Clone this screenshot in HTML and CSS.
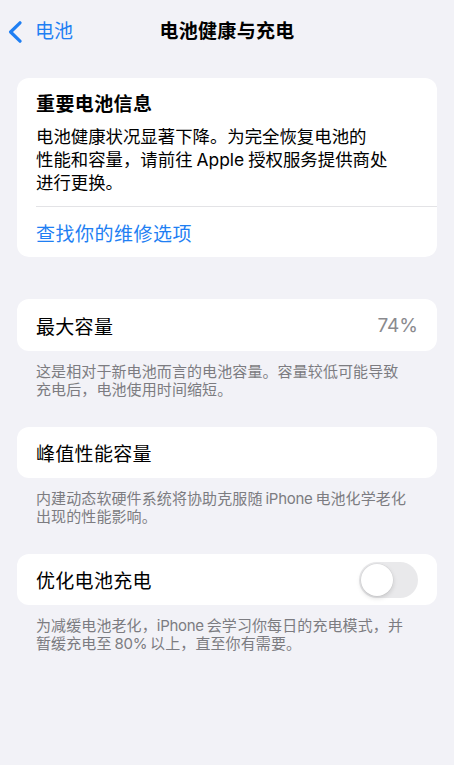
FILE: index.html
```html
<!DOCTYPE html>
<html lang="zh-CN">
<head>
<meta charset="utf-8">
<title>电池健康与充电</title>
<link rel="stylesheet" href="styles.css">
</head>
<body>
<header class="navbar">
  <a class="back" href="#">
    <svg class="chevron" width="15" height="22" viewBox="0 0 15 22" aria-hidden="true">
      <polyline points="12,1.8 2.6,11 12,20.2" fill="none" stroke="currentColor" stroke-width="3.2" stroke-linecap="round" stroke-linejoin="round"/>
    </svg>
    <span>电池</span>
  </a>
  <h1 class="title">电池健康与充电</h1>
  <span></span>
</header>

<main class="content">
  <section class="card notice">
    <div class="notice-body">
      <h2 class="notice-title">重要电池信息</h2>
      <p class="notice-text">电池健康状况显著下降。为完全恢复电池的<br>性能和容量，请前往<span class="latin">Apple</span>授权服务提供商处<br>进行更换。</p>
    </div>
    <a class="notice-link" href="#">查找你的维修选项</a>
  </section>

  <section class="group first">
    <div class="card row tall">
      <span class="label">最大容量</span>
      <span class="value">74%</span>
    </div>
    <p class="footer">这是相对于新电池而言的电池容量。容量较低可能导致<br>充电后，电池使用时间缩短。</p>
  </section>

  <section class="group">
    <div class="card row">
      <span class="label">峰值性能容量</span>
    </div>
    <p class="footer">内建动态软硬件系统将协助克服随<span class="latin">iPhone</span>电池化学老化<br>出现的性能影响。</p>
  </section>

  <section class="group">
    <div class="card row">
      <span class="label">优化电池充电</span>
      <span class="switch" role="switch" aria-checked="false"><span class="knob"></span></span>
    </div>
    <p class="footer">为减缓电池老化，<span class="latin after-punct">iPhone</span>会学习你每日的充电模式，并<br>暂缓充电至<span class="latin">80%</span>以上，直至你有需要。</p>
  </section>
</main>
</body>
</html>
```

FILE: styles.css
```css
* {
  box-sizing: border-box;
}

html,
body {
  margin: 0;
  padding: 0;
}

body {
  background: #f2f2f7;
  color: #000;
  font-family: Inter, "Noto Sans CJK SC", sans-serif;
  width: 454px;
  min-height: 765px;
}

/* navigation bar */
.navbar {
  height: 64px;
  display: grid;
  grid-template-columns: 1fr auto 1fr;
  align-items: center;
  padding-left: 8px;
}

.back {
  display: flex;
  align-items: center;
  gap: 12px;
  color: #1f7ff3;
  text-decoration: none;
  font-size: 19px;
  line-height: 24px;
}

.chevron {
  display: block;
}

.title {
  margin: 0;
  font-size: 19px;
  line-height: 24px;
  font-weight: 600;
  letter-spacing: 0.3px;
  padding-right: 8px;
}

/* content */
.content {
  padding: 14px 17px 0;
}

.card {
  background: #fff;
  border-radius: 12px;
}

/* Latin runs inside Chinese text get a narrow gap on both sides */
.latin {
  margin: 0 4px;
  letter-spacing: 0;
}

.footer .latin {
  margin: 0 3px;
  letter-spacing: -0.3px;
}

/* a full-width comma already carries its own gap */
.footer .latin.after-punct {
  margin-left: 0;
}

.notice-body {
  padding: 15px 19px 12px;
}

.notice-title {
  margin: 0;
  font-size: 19px;
  line-height: 24px;
  font-weight: 600;
  letter-spacing: 0.4px;
}

.notice-text {
  margin: 8px 0 0;
  font-size: 17.4px;
  line-height: 23px;
}

.notice-link {
  display: flex;
  align-items: center;
  height: 51px;
  margin-left: 19px;
  border-top: 1px solid #e3e3e6;
  color: #1f7ff3;
  text-decoration: none;
  font-size: 19px;
  letter-spacing: 0.5px;
}

.group {
  margin-top: 28px;
}

.group.first {
  margin-top: 42px;
}

.row {
  height: 51px;
  display: flex;
  align-items: center;
  justify-content: space-between;
  padding: 0 19px;
}

.row.tall {
  height: 52px;
}

.label {
  font-size: 19px;
  letter-spacing: 0.3px;
}

.value {
  font-size: 19px;
  color: #8a8a8e;
}

.footer {
  margin: 0;
  padding: 12px 19px 0;
  font-size: 15px;
  line-height: 18px;
  color: #7c7c81;
  letter-spacing: 0.1px;
}

/* toggle switch, off state */
.switch {
  position: relative;
  width: 59px;
  height: 36px;
  border-radius: 18px;
  background: #e9e9eb;
  flex: none;
}

.knob {
  position: absolute;
  top: 2px;
  left: 2px;
  width: 32px;
  height: 32px;
  border-radius: 50%;
  background: #fff;
  box-shadow: 0 2px 5px rgba(0, 0, 0, 0.15), 0 0 0 0.5px rgba(0, 0, 0, 0.05);
}
```
